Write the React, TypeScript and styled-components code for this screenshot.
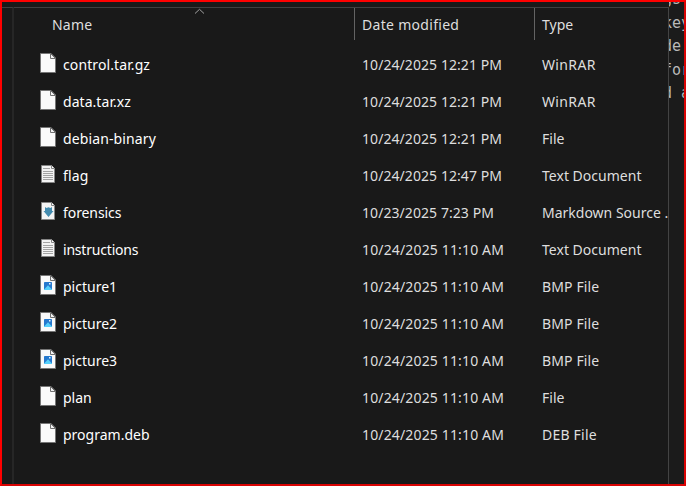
import React from "react";
import styled, { createGlobalStyle } from "styled-components";

const GlobalStyle = createGlobalStyle`
  * { box-sizing: border-box; }
  body { margin: 0; background: #191919; overflow: hidden; }
`;

const Frame = styled.div`
  width: 686px;
  height: 486px;
  display: flex;
  background: #191919;
  border: 2px solid #ff0000;
  border-right-color: #d80404;
  border-bottom-color: #d80404;
  font-family: "Noto Sans", "Open Sans", sans-serif;
  font-size: 14px;
  color: #dedede;
  overflow: hidden;
`;

const NavEdge = styled.div`
  flex: none;
  width: 12px;
  margin-top: 5px;
  border-top: 1px solid #404040;
  border-right: 2px solid #262626;
`;

const Explorer = styled.main`
  flex: none;
  width: 655px;
  margin-top: 5px;
  border-top: 1px solid #404040;
  border-right: 1px solid #434343;
  overflow: hidden;
`;

const Columns = styled.div`
  display: grid;
  grid-template-columns: 341px 180px 133px;
`;

const Header = styled(Columns)`
  height: 38px;
`;

const HeaderCell = styled.div<{ $inset: number; $divider?: boolean }>`
  position: relative;
  height: 32px;
  padding-left: ${(p) => p.$inset}px;
  border-right: ${(p) => (p.$divider ? "1px solid #636363" : "none")};
  line-height: 33px;
`;

const SortArrow = styled.svg`
  position: absolute;
  left: 180px;
  top: 0;
`;

const Row = styled(Columns)`
  height: 37px;
  line-height: 37px;
  white-space: pre;
`;

const NameCell = styled.div`
  display: flex;
  padding-left: 26px;
  color: #fff;
`;

const IconSlot = styled.div`
  flex: none;
  width: 23px;
  padding-top: 6px;
  line-height: 0;
`;

const Cell = styled.div`
  padding-left: 7px;
  overflow: hidden;
`;

const Label = styled.span<{ $track?: number }>`
  letter-spacing: ${(p) => p.$track ?? 0}px;
`;

const Editor = styled.aside`
  flex: 1;
  min-width: 0;
  overflow: hidden;
  background: #1b1b1b;
  color: #b9b9b9;
  font-family: "DejaVu Sans Mono", monospace;
  font-size: 15px;
  line-height: 23.5px;
`;

const CodeLine = styled.div`
  margin-left: -6px;
  white-space: pre;
  &:first-child { margin-top: -14px; }
`;

type Kind = "blank" | "text" | "markdown" | "picture";

function FileIcon({ kind }: { kind: Kind }) {
  if (kind === "text" || kind === "markdown") {
    return (
      <svg width="17" height="22" viewBox="0 0 17 22">
        <path d="M1.5 2.5H11.5L14.5 5.5V19.5H1.5Z" fill="#f4f4f4" stroke="#858585" />
        <path d="M11.5 2.5V5.5H14.5" fill="#fff" stroke="#858585" />
        {kind === "text" ? (
          <path d="M3 5.5H10M3 8.5H13M3 10.5H13M3 12.5H13M3 14.5H13M3 16.5H13" stroke="#a4a4a4" />
        ) : (
          <path d="M5 7L6.500 8 8.500 7.300 10.500 8 12 7V11H13.500L8.500 17 3.500 11H5Z" fill="#448caf" />
        )}
      </svg>
    );
  }
  return (
    <svg width="17" height="22" viewBox="0 0 17 22">
      <path d="M.5 1.500H11L15.500 6V20.500H.5Z" fill="#fafafa" stroke="#767676" />
      <path d="M10.500 1.500V6.500H15.500Z" fill="#f2f2f2" stroke="#707070" />
      {kind === "picture" && (
        <>
          <rect x="4" y="8" width="8" height="8" rx=".7" fill="#2679ce" />
          <path d="M4 15.500L8 11.300 12 15.500V16H4Z" fill="#55d0fb" />
          <rect x="9" y="9" width="1.500" height="1.500" fill="#e8f6ff" />
        </>
      )}
    </svg>
  );
}

interface FileEntry {
  name: string;
  date: string;
  type: string;
  kind: Kind;
  nameTrack?: number;
}

const files: FileEntry[] = [
  { name: "control.tar.gz", date: "10/24/2025 12:21 PM", type: "WinRAR", kind: "blank", nameTrack: 0.1 },
  { name: "data.tar.xz", date: "10/24/2025 12:21 PM", type: "WinRAR", kind: "blank", nameTrack: 0.05 },
  { name: "debian-binary", date: "10/24/2025 12:21 PM", type: "File", kind: "blank", nameTrack: 0.12 },
  { name: "flag", date: "10/24/2025 12:47 PM", type: "Text Document", kind: "text", nameTrack: 0.15 },
  { name: "forensics", date: "10/23/2025 7:23 PM", type: "Markdown Source ...", kind: "markdown", nameTrack: -0.08 },
  { name: "instructions", date: "10/24/2025 11:10 AM", type: "Text Document", kind: "text", nameTrack: -0.2 },
  { name: "picture1", date: "10/24/2025 11:10 AM", type: "BMP File", kind: "picture" },
  { name: "picture2", date: "10/24/2025 11:10 AM", type: "BMP File", kind: "picture" },
  { name: "picture3", date: "10/24/2025 11:10 AM", type: "BMP File", kind: "picture" },
  { name: "plan", date: "10/24/2025 11:10 AM", type: "File", kind: "blank" },
  { name: "program.deb", date: "10/24/2025 11:10 AM", type: "DEB File", kind: "blank" },
];

const typeTrack: Record<string, number> = {
  WinRAR: 0.35,
  "BMP File": 0.12,
  "DEB File": 0.22,
  "Text Document": 0.02,
};

const codeLines = ["gs-", "key", "de ", "for", "d a"];

export default function App() {
  return (
    <>
      <GlobalStyle />
      <Frame>
        <NavEdge />
        <Explorer>
          <Header>
            <HeaderCell $inset={38} $divider>
              <Label $track={0.2}>Name</Label>
              <SortArrow width="12" height="8" viewBox="0 0 12 8">
                <path d="M1 5.500L5.500 1.300 10 5.500" fill="none" stroke="#a0a0a0" />
              </SortArrow>
            </HeaderCell>
            <HeaderCell $inset={7} $divider>
              <Label $track={0.3}>Date modified</Label>
            </HeaderCell>
            <HeaderCell $inset={7}>
              <Label>Type</Label>
            </HeaderCell>
          </Header>
          {files.map((f) => (
            <Row key={f.name}>
              <NameCell>
                <IconSlot>
                  <FileIcon kind={f.kind} />
                </IconSlot>
                <Label $track={f.nameTrack}>{f.name}</Label>
              </NameCell>
              <Cell>
                <Label $track={f.date.endsWith("AM") ? 0.15 : 0.07}>{f.date}</Label>
              </Cell>
              <Cell>
                <Label $track={typeTrack[f.type]}>{f.type}</Label>
              </Cell>
            </Row>
          ))}
        </Explorer>
        <Editor>
          {codeLines.map((line) => (
            <CodeLine key={line}>{line}</CodeLine>
          ))}
        </Editor>
      </Frame>
    </>
  );
}
